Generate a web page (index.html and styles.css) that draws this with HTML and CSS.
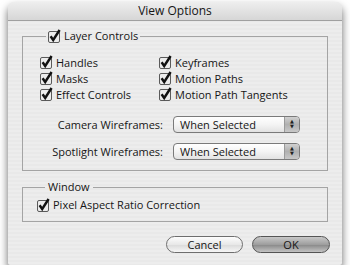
FILE: index.html
```html
<!DOCTYPE html>
<html lang="en-US">
    <head>
        <meta charset="utf-8">
        <link rel="stylesheet" href="styles.css">
    </head>
    <body>
        <div class="window">
            <div class="titlebar">View Options</div>
            <div class="content">
                <fieldset class="group layers">
                    <legend><span class="check"><svg width="13" height="14" viewBox="0 0 13 14"><rect x="0.5" y="2.5" width="11" height="11" rx="1.5" fill="#ececec" stroke="#5a5a5a"/><path d="M2.6 7.2 L5.2 11 L11.6 1" fill="none" stroke="#111" stroke-width="2.4"/></svg></span>Layer Controls</legend>
                    <div class="checks">
                        <label><span class="check"><svg width="13" height="14" viewBox="0 0 13 14"><rect x="0.5" y="2.5" width="11" height="11" rx="1.5" fill="#ececec" stroke="#5a5a5a"/><path d="M2.6 7.2 L5.2 11 L11.6 1" fill="none" stroke="#111" stroke-width="2.4"/></svg></span>Handles</label>
                        <label><span class="check"><svg width="13" height="14" viewBox="0 0 13 14"><rect x="0.5" y="2.5" width="11" height="11" rx="1.5" fill="#ececec" stroke="#5a5a5a"/><path d="M2.6 7.2 L5.2 11 L11.6 1" fill="none" stroke="#111" stroke-width="2.4"/></svg></span>Keyframes</label>
                        <label><span class="check"><svg width="13" height="14" viewBox="0 0 13 14"><rect x="0.5" y="2.5" width="11" height="11" rx="1.5" fill="#ececec" stroke="#5a5a5a"/><path d="M2.6 7.2 L5.2 11 L11.6 1" fill="none" stroke="#111" stroke-width="2.4"/></svg></span>Masks</label>
                        <label><span class="check"><svg width="13" height="14" viewBox="0 0 13 14"><rect x="0.5" y="2.5" width="11" height="11" rx="1.5" fill="#ececec" stroke="#5a5a5a"/><path d="M2.6 7.2 L5.2 11 L11.6 1" fill="none" stroke="#111" stroke-width="2.4"/></svg></span>Motion Paths</label>
                        <label><span class="check"><svg width="13" height="14" viewBox="0 0 13 14"><rect x="0.5" y="2.5" width="11" height="11" rx="1.5" fill="#ececec" stroke="#5a5a5a"/><path d="M2.6 7.2 L5.2 11 L11.6 1" fill="none" stroke="#111" stroke-width="2.4"/></svg></span>Effect Controls</label>
                        <label><span class="check"><svg width="13" height="14" viewBox="0 0 13 14"><rect x="0.5" y="2.5" width="11" height="11" rx="1.5" fill="#ececec" stroke="#5a5a5a"/><path d="M2.6 7.2 L5.2 11 L11.6 1" fill="none" stroke="#111" stroke-width="2.4"/></svg></span>Motion Path Tangents</label>
                    </div>
                    <div class="selectrow first">
                        <span class="selectlabel">Camera Wireframes:</span>
                        <div class="popup"><span class="popup_text">When Selected</span><span class="popup_arrows">&#9650;<br>&#9660;</span></div>
                    </div>
                    <div class="selectrow">
                        <span class="selectlabel">Spotlight Wireframes:</span>
                        <div class="popup"><span class="popup_text">When Selected</span><span class="popup_arrows">&#9650;<br>&#9660;</span></div>
                    </div>
                </fieldset>
                <fieldset class="group window_group">
                    <legend class="plain">Window</legend>
                    <label><span class="check"><svg width="13" height="14" viewBox="0 0 13 14"><rect x="0.5" y="2.5" width="11" height="11" rx="1.5" fill="#ececec" stroke="#5a5a5a"/><path d="M2.6 7.2 L5.2 11 L11.6 1" fill="none" stroke="#111" stroke-width="2.4"/></svg></span>Pixel Aspect Ratio Correction</label>
                </fieldset>
                <div class="buttons">
                    <div class="button">Cancel</div>
                    <div class="button default">OK</div>
                </div>
            </div>
        </div>
    </body>
</html>
```

FILE: styles.css
```css
body{
    margin: 0;
    background-color: #fff;
    font-family: "Open Sans", "DejaVu Sans", sans-serif;
    font-size: 11px;
    color: #151515;
}
div.window{
    margin: 2px 8px 0 8px;
    width: 334px;
    height: 263px;
    border-radius: 6px 6px 2px 2px;
    background-color: #ececec;
    background-image: repeating-linear-gradient(#ededed 0, #ededed 2px, #e9e9e9 2px, #e9e9e9 4px);
    box-shadow: 0 5px 9px rgba(0,0,0,0.6);
    overflow: hidden;
}
div.titlebar{
    height: 18px;
    line-height: 18px;
    text-align: center;
    font-size: 12px;
    background: linear-gradient(#eeeeee, #d6d6d6);
    border-bottom: 1px solid #a0a0a0;
}
div.content{
    padding: 8px 14px 0 14px;
}
fieldset.group{
    margin: 0;
    border: 1px solid #a4a4a4;
    padding: 0;
}
fieldset.group legend{
    margin-left: 6px;
    padding: 0 2px;
    height: 14px;
    line-height: 14px;
    display: flex;
    align-items: center;
}
fieldset.group legend.plain{
    margin-left: 8px;
    padding: 0 3px;
}
span.check{
    display: inline-block;
    width: 13px;
    height: 14px;
    margin-right: 3px;
}
span.check svg{
    display: block;
}
fieldset.layers{
    padding: 11px 0 10px 17px;
}
div.checks{
    display: grid;
    grid-template-columns: 119px auto;
    grid-auto-rows: 16px;
}
label{
    display: flex;
    align-items: center;
}
div.selectrow{
    display: flex;
    align-items: center;
    margin-top: 10px;
}
div.selectrow.first{
    margin-top: 14px;
}
span.selectlabel{
    width: 123px;
    text-align: right;
    margin-right: 10px;
}
div.popup{
    width: 125px;
    height: 15px;
    border: 1px solid #7a7a7a;
    border-radius: 4px;
    background: linear-gradient(#fff, #f4f4f4 50%, #e2e2e2);
    display: flex;
    overflow: hidden;
}
span.popup_text{
    flex: 1;
    padding-left: 6px;
    line-height: 15px;
}
span.popup_arrows{
    width: 14px;
    font-size: 5px;
    line-height: 5px;
    text-align: center;
    padding-top: 2px;
    border-left: 1px solid #9a9a9a;
    background: linear-gradient(#d0d0d0, #b0b0b0 50%, #c8c8c8);
    color: #222;
}
fieldset.window_group{
    margin-top: 9px;
    padding: 3px 0 9px 14px;
}
div.buttons{
    display: flex;
    justify-content: flex-end;
    gap: 9px;
    margin-top: 14px;
    margin-right: -2px;
}
div.button{
    width: 75px;
    height: 15px;
    line-height: 15px;
    text-align: center;
    border: 1px solid #6e6e6e;
    border-radius: 9px;
    background: linear-gradient(#fdfdfd, #e8e8e8 50%, #dcdcdc 55%, #f6f6f6);
}
div.button.default{
    width: 76px;
    background: linear-gradient(#c8c8c8, #9e9e9e 50%, #8c8c8c 55%, #c4c4c4);
    border-color: #555;
}
```
